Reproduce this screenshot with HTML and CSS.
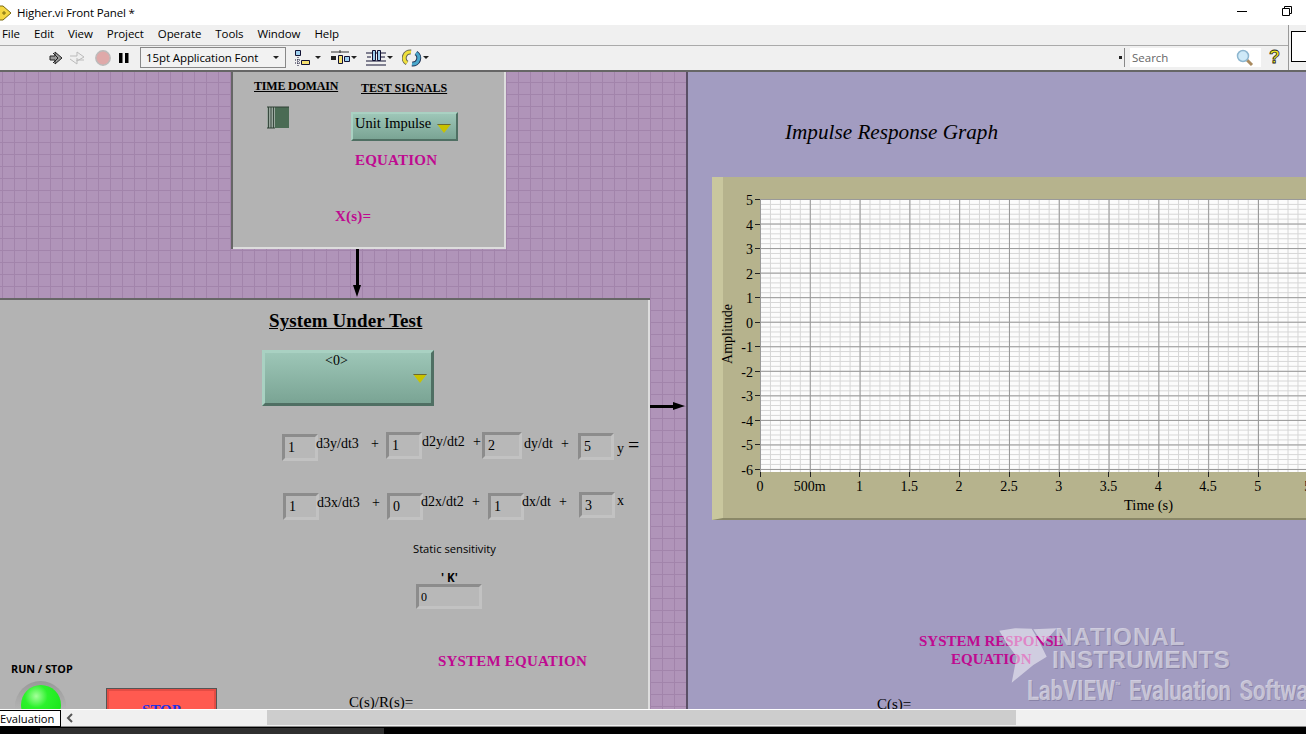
FILE: index.html
```html
<!DOCTYPE html>
<html lang="en">
<head>
<meta charset="UTF-8">
<meta name="viewport" content="width=device-width, initial-scale=1.0">
<title>Higher.vi Front Panel</title>
<link rel="stylesheet" href="styles.css">
</head>
<body>
<div class="window">
    <div class="titlebar">
        <svg class="vi-icon" width="12" height="16" viewBox="0 0 12 16"><path d="M-6 1H3L11 8L3 15H-6Z" fill="#f5d742" stroke="#7a6a10"/><path d="M2 8H6M4 6V10" stroke="#7a6a10"/></svg>
        <span class="title-text">Higher.vi Front Panel *</span>
        <div class="win-buttons">
            <svg width="10" height="10" viewBox="0 0 10 10"><path d="M0 5.5H10" stroke="#000"/></svg>
            <svg width="10" height="10" viewBox="0 0 10 10"><path d="M.5 2.5H7.5V9.5H.5ZM2.5 2.5V.5H9.5V7.5H7.5" fill="none" stroke="#000"/></svg>
        </div>
    </div>

    <div class="bars">
        <div class="bars-main">
            <div class="menubar">
                <span>File</span><span>Edit</span><span>View</span><span>Project</span><span>Operate</span><span>Tools</span><span>Window</span><span>Help</span>
            </div>
            <div class="toolbar">
                <svg class="tool-run" width="14" height="16" viewBox="0 0 14 16"><path d="M1 6H6V2L13 8L6 14V10H1Z" fill="#999" stroke="#222"/><path d="M4 3L9 8L4 13" fill="none" stroke="#222"/></svg>
                <svg class="tool-cont" width="16" height="16" viewBox="0 0 16 16"><path d="M1 6H8V2L15 7L8 11V8M15 10H8V14L1 9" fill="#eee" stroke="#bbb"/></svg>
                <svg class="tool-abort" width="16" height="16" viewBox="0 0 16 16"><circle cx="8" cy="8" r="7.2" fill="#dfa9a9" stroke="#bbb" stroke-width="1.4"/></svg>
                <svg class="tool-pause" width="10" height="12" viewBox="0 0 10 12"><path d="M0 1H3.5V11H0ZM6 1H9.500V11H6Z" fill="#000"/></svg>
                <div class="font-ring"><span>15pt Application Font</span><i class="caret"></i></div>
                <div class="tool-menu">
                    <svg width="20" height="18" viewBox="0 0 20 18"><path d="M1.500 1.500H6.500V6.500H1.500Z" fill="#9fd0f0" stroke="#113"/><path d="M7.500 11.500H15.500V15.500H7.500Z" fill="#f5e070" stroke="#113"/><path d="M4 8V17M1 11H6M1 14H6" stroke="#113" stroke-dasharray="1 1"/></svg><i class="caret"></i>
                </div>
                <div class="tool-menu">
                    <svg width="20" height="18" viewBox="0 0 20 18"><path d="M1 3H19M10 1V4" stroke="#333"/><path d="M1 7H6V11H1Z" fill="#222"/><path d="M8.500 6.500H12.500V14.500H8.500Z" fill="#f5e070" stroke="#113"/><path d="M14.500 7.500H19.500V12.500H14.500Z" fill="#9fd0f0" stroke="#113"/></svg><i class="caret"></i>
                </div>
                <div class="tool-menu">
                    <svg width="20" height="18" viewBox="0 0 20 18"><path d="M0 4H20M0 12H20M0 16H20" stroke="#113"/><path d="M6.500 1.500H9.500V11.500H6.500ZM11.500 1.500H14.500V11.500H11.500Z" fill="#9fd0f0" stroke="#113"/><path d="M1 8H5M15 8H19" stroke="#113"/></svg><i class="caret"></i>
                </div>
                <div class="tool-menu">
                    <svg width="20" height="18" viewBox="0 0 20 18"><path d="M9 3A6 6 0 0 0 5 14" fill="none" stroke="#665" stroke-width="5"/><path d="M9 3A6 6 0 0 0 5 14" fill="none" stroke="#efe03c" stroke-width="3"/><path d="M10 15A6 6 0 0 0 14 4" fill="none" stroke="#235" stroke-width="5"/><path d="M10 15A6 6 0 0 0 14 4" fill="none" stroke="#4aa8cc" stroke-width="3"/></svg><i class="caret"></i>
                </div>
                <div class="toolbar-right">
                    <i class="expander"></i>
                    <div class="searchbox">
                        <span>Search</span>
                        <svg width="18" height="18" viewBox="0 0 18 18"><path d="M10 10L16 16" stroke="#a98a5f" stroke-width="3"/><circle cx="7" cy="7" r="5.500" fill="#cfeaf8" stroke="#8db6cf" stroke-width="1.500"/></svg>
                    </div>
                    <span class="help-mark">?</span>
                </div>
            </div>
        </div>
        <div class="bars-side"><div class="side-box"></div></div>
    </div>

    <div class="canvas">
        <div class="pane-left">
            <div class="signal-panel">
                <span class="lbl head hd-time">TIME DOMAIN</span>
                <span class="lbl head hd-test">TEST SIGNALS</span>
                <svg class="toggle" width="23" height="23" viewBox="0 0 23 23"><rect x="0" y="1" width="8" height="21" fill="#9aa89f"/><path d="M1.500 1V22M4 1V22M6.500 1V22" stroke="#39493f"/><rect x="8" y="1" width="14" height="21" fill="#4a6b54"/><path d="M0 1H22M0 22H8" stroke="#2e4035"/></svg>
                <div class="ring ring-signal">
                    <span class="ring-text">Unit Impulse</span>
                    <i class="ring-arrow"></i>
                </div>
                <span class="lbl pink eq-label">EQUATION</span>
                <span class="lbl pink xs-label">X(s)=</span>
            </div>

            <div class="arrow-down"><i></i></div>

            <div class="system-panel">
                <span class="lbl sys-title">System Under Test</span>
                <div class="ring ring-system">
                    <span class="ring-zero">&lt;0&gt;</span>
                    <i class="ring-arrow"></i>
                </div>

                <div class="num n1">1</div><span class="lbl term t1">d3y/dt3</span><span class="lbl term p1">+</span>
                <div class="num n2">1</div><span class="lbl term t2">d2y/dt2</span><span class="lbl term p2">+</span>
                <div class="num n3">2</div><span class="lbl term t3">dy/dt</span><span class="lbl term p3">+</span>
                <div class="num n4">5</div><span class="lbl term t4">y</span><span class="lbl eq-sign">=</span>

                <div class="num n5">1</div><span class="lbl term t5">d3x/dt3</span><span class="lbl term p5">+</span>
                <div class="num n6">0</div><span class="lbl term t6">d2x/dt2</span><span class="lbl term p6">+</span>
                <div class="num n7">1</div><span class="lbl term t7">dx/dt</span><span class="lbl term p7">+</span>
                <div class="num n8">3</div><span class="lbl term t8">x</span>

                <span class="lbl ui static-lbl">Static sensitivity</span>
                <span class="lbl ui k-lbl">' K'</span>
                <div class="num ui n-k">0</div>

                <span class="lbl pink sys-eq">SYSTEM EQUATION</span>
                <span class="lbl cs-lbl">C(s)/R(s)=</span>

                <span class="lbl ui run-lbl">RUN / STOP</span>
                <div class="led"><i></i></div>
                <div class="stop-btn">STOP</div>
            </div>

            <div class="arrow-right"><i></i></div>
        </div>

        <div class="splitter"></div>

        <div class="pane-right">
            <span class="lbl graph-title">Impulse Response Graph</span>

            <div class="graph">
                <span class="lbl y-name">Amplitude</span>
                <div class="y-axis">
                    <span>5</span><span>4</span><span>3</span><span>2</span><span>1</span><span>0</span><span>-1</span><span>-2</span><span>-3</span><span>-4</span><span>-5</span><span>-6</span>
                </div>
                <div class="plot"></div>
                <div class="x-axis">
                    <span>0</span><span>500m</span><span>1</span><span>1.5</span><span>2</span><span>2.5</span><span>3</span><span>3.5</span><span>4</span><span>4.5</span><span>5</span><span>5</span>
                </div>
                <span class="lbl x-name">Time (s)</span>
            </div>

            <span class="lbl pink resp-1">SYSTEM RESPONSE</span>
            <span class="lbl pink resp-2">EQUATION</span>
            <span class="lbl cs-right">C(s)=</span>
        </div>

        <!-- evaluation watermark sits over the panel text -->
        <div class="watermark">
            <svg class="ni-logo" width="66" height="62" viewBox="0 0 66 62"><path d="M4.300 5.700L20 3.300L36.700 3.700L44.300 16.700L51.700 31.700L38.300 40L16.700 57.700L21.700 31.700L11.700 18.300Z M38.300 4.300L61.700 3.300L48.300 18.300L44.300 13.300Z" fill="#fff"/></svg>
            <span class="wm-national">NATIONAL</span>
            <span class="wm-instruments">INSTRUMENTS</span>
            <span class="wm-labview">LabVIEW<sup>™</sup> Evaluation Software</span>
        </div>
    </div>

    <div class="statusbar">
        <span class="eval-tag">Evaluation</span>
        <svg class="scroll-left" width="8" height="10" viewBox="0 0 8 10"><path d="M6 1L2 5L6 9" fill="none" stroke="#555" stroke-width="2"/></svg>
        <div class="scroll-thumb"></div>
    </div>
    <div class="taskbar"><div class="task-strip"></div></div>
</div>
</body>
</html>
```

FILE: styles.css
```css
* {
    box-sizing: border-box;
}

html, body {
    margin: 0;
    padding: 0;
    height: 100%;
    overflow: hidden;
}

body {
    font-family: "Open Sans", "Noto Sans", sans-serif;
    color: black;
    background-color: black;
}

.window {
    display: flex;
    flex-direction: column;
    height: 734px;
    width: 1306px;
    overflow: hidden;
}

/* title bar */
.titlebar {
    display: flex;
    align-items: center;
    height: 25px;
    background-color: white;
    flex-shrink: 0;
}

.vi-icon {
    margin-right: 5px;
}

.title-text {
    font-size: 11.500px;
    letter-spacing: -0.150px;
}

.win-buttons {
    display: flex;
    gap: 35px;
    margin-left: auto;
    margin-right: 14px;
    margin-bottom: 4px;
}

/* menu and tool bars */
.bars {
    position: relative;
    z-index: 2;
    display: flex;
    height: 47px;
    margin-bottom: -1px;
    flex-shrink: 0;
    border-bottom: 2px solid #666;
    background-color: #f0f0f0;
}

.bars-main {
    flex: 1;
    display: flex;
    flex-direction: column;
}

.bars-side {
    width: 18px;
    padding: 6px 0 8px 2px;
    border-left: 1px solid #999;
}

.side-box {
    height: 100%;
    background-color: white;
    border: 1px solid black;
    border-right: none;
}

.menubar {
    display: flex;
    gap: 14px;
    height: 21px;
    padding: 0 0 3px 2px;
    align-items: center;
    font-size: 11.500px;
    border-bottom: 1px solid #aaa;
    letter-spacing: -0.080px;
}

.toolbar {
    flex: 1;
    display: flex;
    align-items: center;
    padding: 0 0 1px 49px;
}

.tool-cont {
    margin-left: 6px;
}

.tool-abort {
    margin-left: 10px;
}

.tool-pause {
    margin-left: 8px;
}

.font-ring {
    display: flex;
    align-items: center;
    justify-content: space-between;
    width: 146px;
    height: 21px;
    margin-left: 11px;
    padding: 0 6px 0 5px;
    border: 1px solid #888;
    font-size: 11.500px;
    letter-spacing: -0.100px;
    background-color: #f2f2f2;
}

.caret {
    display: inline-block;
    border-top: 3px solid #222;
    border-left: 3.500px solid transparent;
    border-right: 3.500px solid transparent;
}

.tool-menu {
    display: flex;
    align-items: center;
    gap: 1px;
    margin-left: 7px;
    margin-right: 2px;
}

.font-ring + .tool-menu {
    margin-left: 8px;
}

.toolbar-right {
    margin-left: auto;
    display: flex;
    align-items: center;
}

.expander {
    width: 6px;
    height: 19px;
    margin-right: 5px;
    border-right: 1px solid #888;
    background: linear-gradient(#222, #222) left center / 3px 3px no-repeat;
}

.searchbox {
    display: flex;
    align-items: center;
    justify-content: space-between;
    width: 131px;
    height: 19px;
    padding: 0 7px 0 2px;
    background-color: white;
    font-size: 11.500px;
    color: #666;
}

.help-mark {
    width: 27px;
    text-align: center;
    font-family: "Liberation Sans", sans-serif;
    font-weight: bold;
    font-size: 18px;
    color: #f6ee1e;
    -webkit-text-stroke: 0.800px #222;
}

/* front panel */
.canvas {
    position: relative;
    flex: 0 0 638px;
    display: flex;
    overflow: hidden;
}

.pane-left {
    position: relative;
    width: 686px;
    overflow: hidden;
    background-color: #b094b9;
    background-image:
        linear-gradient(to right, #a284ab 1px, transparent 1px),
        linear-gradient(to bottom, #a284ab 1px, transparent 1px);
    background-size: 12px 12px;
    background-position: 2px 11px;
}

.splitter {
    width: 2px;
    background-color: #5a4f66;
}

.pane-right {
    position: relative;
    flex: 1;
    overflow: hidden;
    background-color: #a29cc1;
}

.lbl {
    position: absolute;
    line-height: 18px;
    white-space: nowrap;
    font-family: "Liberation Serif", serif;
}

.pink {
    color: #bf0a90;
    font-weight: bold;
    font-size: 15px;
    letter-spacing: 0.200px;
}

.ui {
    font-family: "Open Sans", "Noto Sans", sans-serif;
}

/* test signal box */
.signal-panel {
    position: absolute;
    left: 231px;
    top: 0;
    width: 275px;
    height: 178px;
    background-color: #b3b3b3;
    box-shadow: inset 2px 0 #666, inset -2px 0 #ddd, inset 0 -2px #ddd;
}

.head {
    font-weight: bold;
    font-size: 12px;
    text-decoration: underline;
}

.hd-time { left: 23px; top: 6px; letter-spacing: -0.200px; }
.hd-test { left: 130px; top: 8px; }

.toggle {
    position: absolute;
    left: 36px;
    top: 35px;
}

.ring {
    position: absolute;
    background: linear-gradient(#9dc6b7, #7aa494);
    border: 2px solid;
    border-color: #a9d1c2 #4f6f63 #4f6f63 #a9d1c2;
    font-family: "Liberation Serif", serif;
}

.ring-signal {
    left: 120px;
    top: 41px;
    width: 107px;
    height: 29px;
}

.ring-text {
    position: absolute;
    left: 2px;
    top: 0;
    line-height: 18px;
    font-size: 14.500px;
    white-space: nowrap;
}

.ring-arrow {
    position: absolute;
    width: 14px;
    height: 9px;
    background: linear-gradient(#6c6a30 1px, #c8c200 1px);
    clip-path: polygon(0 0, 100% 0, 50% 100%);
}

.ring-signal .ring-arrow { right: 5px; top: 10px; }

.eq-label { left: 124px; top: 80px; }
.xs-label { left: 104px; top: 136px; }

/* connector arrows */
.arrow-down {
    position: absolute;
    left: 356px;
    top: 178px;
    width: 3px;
    height: 37px;
    background-color: black;
}

.arrow-down i {
    position: absolute;
    left: -3px;
    top: 36px;
    width: 0;
    height: 0;
    border-top: 12px solid black;
    border-left: 4.500px solid transparent;
    border-right: 4.500px solid transparent;
}

.arrow-right {
    position: absolute;
    left: 650px;
    top: 334px;
    width: 24px;
    height: 3px;
    background-color: black;
}

.arrow-right i {
    position: absolute;
    left: 23px;
    top: -3px;
    width: 0;
    height: 0;
    border-left: 12px solid black;
    border-top: 4.500px solid transparent;
    border-bottom: 4.500px solid transparent;
}

/* system under test box */
.system-panel {
    position: absolute;
    left: 0;
    top: 227px;
    width: 650px;
    height: 420px;
    background-color: #b3b3b3;
    box-shadow: inset 0 2px #666, inset -2px 0 #ddd;
}

.sys-title {
    left: 269px;
    top: 14px;
    font-size: 19px;
    font-weight: bold;
    letter-spacing: 0.100px;
    text-decoration: underline;
}

.ring-system {
    left: 262px;
    top: 52px;
    width: 172px;
    height: 56px;
    border-width: 3px;
}

.ring-zero {
    position: absolute;
    left: 60px;
    top: 0;
    font-size: 14px;
    line-height: 16px;
}

.ring-system .ring-arrow { right: 4px; top: 21px; }

.num {
    position: absolute;
    width: 36px;
    height: 27px;
    padding: 3px 0 0 3px;
    border: 3px solid;
    border-color: #8c8c8c #c2c2c2 #c2c2c2 #8c8c8c;
    background-color: #b8b8b8;
    font-family: "Liberation Serif", serif;
    font-size: 14px;
    line-height: 16px;
}

.n1 { left: 282px; top: 136px; }
.n2 { left: 386px; top: 134px; }
.n3 { left: 482px; top: 134px; width: 40px; }
.n4 { left: 578px; top: 135px; }
.n5 { left: 283px; top: 195px; }
.n6 { left: 387px; top: 195px; }
.n7 { left: 488px; top: 195px; }
.n8 { left: 579px; top: 194px; height: 26px; }

.term {
    font-size: 14px;
}

.t1 { left: 316px; top: 137px; }
.p1 { left: 371px; top: 137px; }
.t2 { left: 422px; top: 135px; }
.p2 { left: 473px; top: 135px; }
.t3 { left: 524px; top: 137px; }
.p3 { left: 561px; top: 137px; }
.t4 { left: 617px; top: 142px; }
.eq-sign { left: 628px; top: 138px; font-size: 20px; }
.t5 { left: 317px; top: 196px; }
.p5 { left: 372px; top: 196px; }
.t6 { left: 421px; top: 195px; }
.p6 { left: 472px; top: 195px; }
.t7 { left: 522px; top: 195px; }
.p7 { left: 559px; top: 195px; }
.t8 { left: 617px; top: 194px; }

.static-lbl {
    left: 413px;
    top: 242px;
    font-size: 11.200px;
}

.k-lbl {
    left: 441px;
    top: 271px;
    font-size: 11.500px;
    font-weight: bold;
}

.n-k {
    left: 416px;
    top: 286px;
    width: 66px;
    height: 25px;
    padding: 2px 0 0 2px;
    font-size: 12px;
}

.sys-eq { left: 438px; top: 354px; }

.cs-lbl {
    left: 349px;
    top: 395px;
    font-size: 15px;
}

.run-lbl {
    left: 11px;
    top: 362px;
    font-size: 10.800px;
    font-weight: bold;
}

.led {
    position: absolute;
    left: 15px;
    top: 383px;
    width: 51px;
    height: 51px;
    border-radius: 50%;
    background-color: #c2c2c2;
    background-image: linear-gradient(#999, #c8c8c8);
}

.led i {
    position: absolute;
    left: 6px;
    top: 4px;
    width: 40px;
    height: 40px;
    border-radius: 50%;
    background: radial-gradient(circle at 38% 28%, #a6ff9c 0, #2cf22c 30%, #10e010 100%);
}

.stop-btn {
    position: absolute;
    left: 106px;
    top: 390px;
    width: 111px;
    height: 50px;
    padding-top: 13px;
    background-color: #ff5a50;
    border: 1px solid #555;
    box-shadow: inset 0 0 0 2px #e44c44;
    text-align: center;
    font-family: "Liberation Serif", serif;
    font-weight: bold;
    font-size: 15px;
    color: #1b33e8;
}

/* waveform graph */
.graph-title {
    left: 97px;
    top: 48px;
    line-height: 26px;
    font-size: 21.200px;
    font-style: italic;
}

.graph {
    position: absolute;
    left: 24px;
    top: 106px;
    width: 640px;
    height: 343px;
    background-color: #b6b38d;
    border-left: 11px solid #c9c79e;
    border-bottom: 2px solid #8a8868;
    font-family: "Liberation Serif", serif;
}

.y-name {
    left: -28px;
    top: 148px;
    width: 66px;
    font-size: 14px;
    text-align: center;
    transform: rotate(-90deg);
}

.plot {
    position: absolute;
    left: 37px;
    top: 22px;
    width: 600px;
    height: 273px;
    background-color: #fcfcfc;
    background-image:
        linear-gradient(to right, #999 1px, transparent 1px),
        linear-gradient(to bottom, #999 1px, transparent 1px),
        linear-gradient(to right, #d6d6d6 1px, transparent 1px),
        linear-gradient(to bottom, #d6d6d6 1px, transparent 1px);
    background-size: 49.800px 100%, 100% 24.550px, 9.960px 100%, 100% 4.910px;
}

.y-axis {
    position: absolute;
    left: 0;
    top: 15px;
    width: 37px;
    height: 288px;
    display: flex;
    flex-direction: column;
    justify-content: space-between;
    text-align: right;
    font-size: 14px;
    line-height: 18px;
    padding-right: 7px;
}

.y-axis span {
    position: relative;
    height: 18px;
}

.y-axis span::after {
    content: "";
    position: absolute;
    right: -7px;
    top: 7px;
    width: 5px;
    height: 1px;
    background-color: #222;
}

.x-axis {
    position: absolute;
    left: 12px;
    top: 295px;
    display: flex;
    font-size: 14px;
    line-height: 18px;
}

.x-axis span {
    position: relative;
    flex: 0 0 49.800px;
    padding-top: 6px;
    text-align: center;
}

.x-axis span::before {
    content: "";
    position: absolute;
    left: 50%;
    top: 0;
    width: 1px;
    height: 5px;
    background-color: #222;
}

.x-name {
    left: 401px;
    top: 319px;
    font-size: 14.500px;
}

.resp-1 { left: 231px; top: 561px; letter-spacing: 0; }
.resp-2 { left: 263px; top: 579px; letter-spacing: 0; }

.cs-right {
    left: 189px;
    top: 624px;
    font-size: 15px;
}

/* watermark */
.watermark {
    position: absolute;
    left: 995px;
    top: 554px;
    width: 311px;
    height: 84px;
    overflow: hidden;
    color: rgba(255, 255, 255, 0.5);
    font-family: "Liberation Sans", sans-serif;
    font-weight: bold;
    text-shadow: 1px 1px 0 rgba(90, 85, 120, 0.35);
    pointer-events: none;
}

.ni-logo {
    position: absolute;
    left: 0;
    top: 0;
    opacity: 0.5;
}

.wm-national,
.wm-instruments,
.wm-labview {
    position: absolute;
    white-space: nowrap;
}

.wm-national {
    left: 60px;
    top: 0;
    font-size: 24px;
    line-height: 24px;
    letter-spacing: 1px;
}

.wm-instruments {
    left: 57px;
    top: 23px;
    font-size: 24px;
    line-height: 24px;
    letter-spacing: 0.450px;
}

.wm-labview {
    left: 32px;
    top: 50px;
    font-family: "Roboto", sans-serif;
    font-size: 27px;
    line-height: 32px;
    letter-spacing: -0.200px;
    word-spacing: 4px;
    transform: scaleX(0.82);
    transform-origin: left center;
}

.wm-labview sup {
    font-size: 11px;
    line-height: 0;
}

/* bottom strip */
.statusbar {
    position: relative;
    display: flex;
    align-items: center;
    height: 18px;
    flex-shrink: 0;
    background-color: #f0f0f0;
    border-top: 1px solid white;
    border-bottom: 1px solid #888;
}

.eval-tag {
    width: 61px;
    height: 17px;
    line-height: 15px;
    background-color: white;
    border: 1px solid black;
    border-left: none;
    font-size: 11.200px;
    white-space: nowrap;
    align-self: flex-start;
}

.scroll-left {
    margin-left: 5px;
}

.scroll-thumb {
    position: absolute;
    left: 267px;
    top: 0;
    width: 749px;
    height: 15px;
    background-color: #cdcdcd;
}

.taskbar {
    flex: 0 0 7px;
    background-color: black;
    padding-left: 40px;
    padding-top: 1px;
}

.task-strip {
    width: 344px;
    height: 100%;
    background-color: #303030;
}
```
